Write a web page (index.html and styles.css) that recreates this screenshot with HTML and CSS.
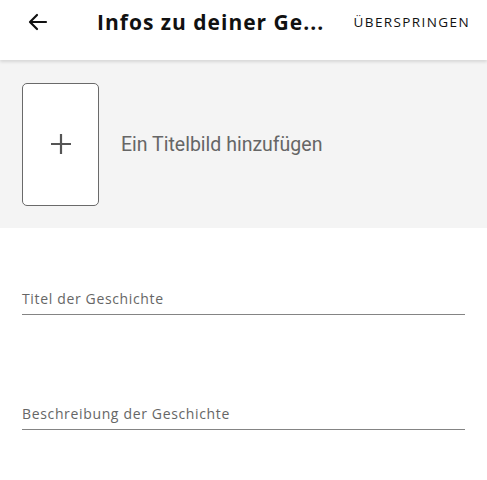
FILE: index.html
```html
<!DOCTYPE html>
<html lang="de">
<head>
<meta charset="utf-8">
<link rel="stylesheet" href="styles.css">
</head>
<body>
<header class="appbar">
  <button class="back" aria-label="Zurück">
    <svg width="24" height="24" viewBox="0 0 24 24"><path d="M20 12H5M11 5l-7 7 7 7" fill="none" stroke="#111" stroke-width="2.2" stroke-linecap="round" stroke-linejoin="round"/></svg>
  </button>
  <h1 class="title">Infos zu deiner Ge...</h1>
  <span class="skip">ÜBERSPRINGEN</span>
</header>
<section class="cover">
  <div class="cover-box">
    <svg width="22" height="22" viewBox="0 0 22 22"><path d="M11 1v20M1 11h20" stroke="#555" stroke-width="2.2"/></svg>
  </div>
  <span class="cover-text">Ein Titelbild hinzufügen</span>
</section>
<main class="form">
  <div class="field"><span class="label">Titel der Geschichte</span></div>
  <div class="field"><span class="label">Beschreibung der Geschichte</span></div>
</main>
</body>
</html>
```
FILE: styles.css
```css
html, body { margin: 0; padding: 0; background: #fff; }
body { font-family: "Open Sans", sans-serif; width: 487px; height: 480px; overflow: hidden; }
.appbar {
  height: 60px; display: flex; align-items: center;
  box-shadow: 0 2px 3px rgba(0,0,0,0.12);
  position: relative; z-index: 1; background: #fff;
}
.back { border: 0; background: none; padding: 0; margin: 0 0 16px 26px; width: 24px; height: 24px; display: flex; }
.title { margin: 0 0 16px 47px; font-size: 21px; font-weight: 700; color: #111; letter-spacing: 1px; white-space: nowrap; }
.skip { margin: 0 17px 16px auto; font-size: 13.5px; color: #111; letter-spacing: 1.4px; }
.cover { background: #f4f4f4; height: 168px; display: flex; align-items: center; padding-left: 22px; }
.cover-box {
  width: 75px; height: 121px; border: 1.5px solid #6a6a6a; border-radius: 5px; background: #fff;
  display: flex; align-items: center; justify-content: center;
}
.cover-text { margin-left: 22px; font-family: Roboto, sans-serif; font-size: 19.5px; color: #666; }
.form { padding: 60px 22px 0; display: flex; flex-direction: column; gap: 88px; }
.field { border-bottom: 1.5px solid #848484; height: 26px; display: flex; align-items: flex-start; }
.label { font-size: 14px; line-height: 22px; color: #666; letter-spacing: 0.65px; }
```
